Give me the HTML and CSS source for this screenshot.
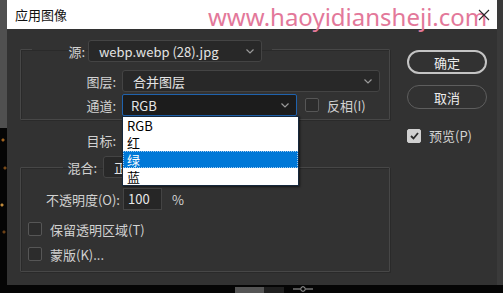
FILE: index.html
```html
<!DOCTYPE html>
<html>
<head>
  <title>应用图像</title>
  <link rel="stylesheet" href="styles.css">
</head>
<body>
  <div class="screen">
    <div class="screen-row">
      <div class="edge-left"></div>
      <div class="dialog">
        <div class="titlebar">
          <span class="title">应用图像</span>
          <span class="watermark">www.haoyidiansheji.com</span>
          <svg class="close" width="12" height="12" viewBox="0 0 12 12">
            <path d="M1 1 L11 11 M11 1 L1 11" stroke="#2a2a2a" stroke-width="1.1" fill="none"/>
          </svg>
        </div>
        <div class="dialog-body">
          <div class="main">
            <fieldset class="group group-source">
              <legend class="legend legend-source">
                <span class="legend-label">源:</span>
                <div class="select select-source">
                  <span>webp.webp (28).jpg</span>
                  <svg class="chev" width="8" height="5" viewBox="0 0 8 5"><path d="M0.5 0.5 L4 4 L7.5 0.5" stroke="#9a9a9a" stroke-width="1.2" fill="none"/></svg>
                </div>
              </legend>
              <div class="field field-layer">
                <span class="field-label">图层:</span>
                <div class="select select-layer">
                  <span>合并图层</span>
                  <svg class="chev" width="8" height="5" viewBox="0 0 8 5"><path d="M0.5 0.5 L4 4 L7.5 0.5" stroke="#9a9a9a" stroke-width="1.2" fill="none"/></svg>
                </div>
              </div>
              <div class="field field-channel">
                <span class="field-label">通道:</span>
                <div class="select-wrap">
                  <div class="select select-channel">
                    <span>RGB</span>
                    <svg class="chev" width="8" height="5" viewBox="0 0 8 5"><path d="M0.5 0.5 L4 4 L7.5 0.5" stroke="#9a9a9a" stroke-width="1.2" fill="none"/></svg>
                  </div>
                  <ul class="dropdown">
                    <li>RGB</li>
                    <li>红</li>
                    <li class="active">绿</li>
                    <li>蓝</li>
                  </ul>
                </div>
                <label class="check check-invert"><span class="box"></span>反相(I)</label>
              </div>
            </fieldset>

            <div class="field field-target">
              <span class="field-label field-label-wide">目标:</span>
            </div>

            <fieldset class="group group-blend">
              <legend class="legend legend-blend">
                <span class="legend-label legend-label-blend">混合:</span>
                <div class="select select-blend">
                  <span>正常</span>
                  <svg class="chev" width="8" height="5" viewBox="0 0 8 5"><path d="M0.5 0.5 L4 4 L7.5 0.5" stroke="#9a9a9a" stroke-width="1.2" fill="none"/></svg>
                </div>
              </legend>
              <div class="field field-opacity">
                <span class="field-label field-label-opacity">不透明度(O):</span>
                <div class="input">100</div>
                <span class="unit">%</span>
              </div>
              <label class="check check-row"><span class="box"></span>保留透明区域(T)</label>
              <label class="check check-row check-row-2"><span class="box"></span>蒙版(K)...</label>
            </fieldset>
          </div>

          <div class="side">
            <button class="btn btn-primary">确定</button>
            <button class="btn">取消</button>
            <label class="check check-preview">
              <span class="box box-checked">
                <svg width="9" height="8" viewBox="0 0 9 8"><path d="M1 4 L3.5 6.5 L8 1" stroke="#2b2b2b" stroke-width="1.8" fill="none"/></svg>
              </span>预览(P)
            </label>
          </div>
        </div>
      </div>
      <div class="edge-right"></div>
    </div>
    <div class="taskbar">
      <span class="task-grey"></span>
      <span class="task-dark"></span>
      <span class="task-slider">
        <svg width="20" height="6" viewBox="0 0 20 6"><path d="M0 3 H7 M13 3 H20" stroke="#a8a8a8" stroke-width="1"/><circle cx="10" cy="3" r="2.3" stroke="#a8a8a8" fill="none"/></svg>
      </span>
    </div>
  </div>
</body>
</html>
```

FILE: styles.css
```css
body {
  margin: 0;
  background: #000;
  font-family: "Noto Sans CJK SC", "Noto Sans", sans-serif;
  font-size: 13px;
}

.screen {
  width: 503px;
  height: 293px;
  overflow: hidden;
  display: flex;
  flex-direction: column;
}

.screen-row {
  display: flex;
  height: 285px;
}

.edge-left {
  width: 7px;
  background:
    radial-gradient(circle at 3px 140px, #a0621e 0 1px, transparent 2px),
    radial-gradient(circle at 5px 168px, #7a4a18 0 1px, transparent 2px),
    radial-gradient(circle at 2px 205px, #c08a3a 0 1px, transparent 2px),
    radial-gradient(circle at 4px 232px, #6b4015 0 1px, transparent 2px),
    linear-gradient(#505050 0 128px, #050505 128px);
}

.edge-right {
  width: 6px;
  background: #3a3a3a;
}

.dialog {
  width: 490px;
  display: flex;
  flex-direction: column;
}

.titlebar {
  position: relative;
  height: 29px;
  background: #fff;
  display: flex;
  align-items: center;
  padding-left: 8px;
}

.title {
  color: #111;
  font-size: 13px;
}

.watermark {
  position: absolute;
  left: 201px;
  top: 0;
  font-family: "Noto Sans", sans-serif;
  font-size: 24px;
  color: #e3789a;
  white-space: nowrap;
}

.close {
  position: absolute;
  left: 471px;
  top: 9px;
}

.dialog-body {
  flex: 1;
  display: flex;
  background: #323232;
}

.main {
  width: 383px;
  padding: 7px 0 0 13px;
}

.group {
  margin: 0;
  padding: 0 0 3px 0;
  min-width: 0;
  width: 370px;
  box-sizing: border-box;
  border: 1px solid #474747;
  border-radius: 1px;
  box-shadow: 1px 1px 0 #2a2a2a, inset 1px 1px 0 #2a2a2a;
}

.legend {
  display: flex;
  align-items: center;
  padding: 4px 10px 0 0;
  margin-left: 11px;
}

.legend-label {
  width: 53px;
  margin-right: 3px;
  text-align: right;
  color: #d2d2d2;
}

.legend-blend {
  padding: 0 6px 0 0;
  margin-left: 42px;
}

.legend-label-blend {
  width: 34px;
  margin-right: 6px;
}

.select {
  height: 22px;
  box-sizing: border-box;
  display: flex;
  align-items: center;
  justify-content: space-between;
  padding: 0 7px 0 10px;
  background: #282828;
  border: 1px solid #444;
  border-radius: 3px;
  color: #e4e4e4;
}

.select-source {
  width: 174px;
}

.select-layer {
  width: 258px;
}

.select-blend {
  width: 157px;
}

.select-channel {
  width: 175px;
  padding-left: 8px;
  background: #1c1c1c;
  border-color: #1f62ad;
  border-radius: 2px;
}

.field {
  display: flex;
  align-items: center;
  height: 22px;
}

.field-label {
  width: 95px;
  margin-right: 6px;
  text-align: right;
  color: #d2d2d2;
}

.field-layer {
  margin-top: 8px;
}

.field-channel {
  margin-top: 2px;
}

.select-wrap {
  position: relative;
}

.dropdown {
  position: absolute;
  top: 100%;
  left: 0;
  z-index: 10;
  width: 175px;
  margin: 0;
  padding: 0;
  list-style: none;
  background: #fff;
  border: 1px solid #16283c;
  box-shadow: 1px 1px 2px rgba(0, 0, 0, 0.6);
}

.dropdown li {
  height: 17px;
  line-height: 17px;
  padding-left: 4px;
  color: #000;
  font-size: 13px;
  box-sizing: border-box;
}

.dropdown li.active {
  background: #0078d7;
  color: #fff;
  outline: 1px dotted #9fc9ee;
  outline-offset: -1px;
}

.check {
  display: flex;
  align-items: center;
  color: #d2d2d2;
}

.box {
  width: 12px;
  height: 12px;
  border: 1px solid #565656;
  border-radius: 2px;
  background: #2c2c2c;
  margin-right: 8px;
  display: flex;
  align-items: center;
  justify-content: center;
}

.check-invert {
  margin-left: 8px;
}

.field-target {
  margin-top: 9px;
}

.field-label-wide {
  width: 96px;
}

.group-blend {
  margin-top: 5px;
  padding-bottom: 8px;
}

.field-opacity {
  margin-top: 10px;
}

.field-label-opacity {
  width: 99px;
  margin-right: 3px;
  white-space: nowrap;
}

.input {
  width: 39px;
  height: 22px;
  box-sizing: border-box;
  padding-left: 4px;
  line-height: 20px;
  background: #262626;
  border: 1px solid #444;
  color: #e8e8e8;
}

.unit {
  margin-left: 10px;
  color: #d2d2d2;
}

.check-row {
  height: 18px;
  margin: 10px 0 0 7px;
}

.check-row-2 {
  margin-top: 7px;
}

.side {
  width: 107px;
  padding: 21px 0 0 17px;
  display: flex;
  flex-direction: column;
  align-items: flex-start;
}

.btn {
  width: 80px;
  height: 24px;
  border: 1px solid #5e5e5e;
  border-radius: 12px;
  background: transparent;
  color: #ededed;
  font-family: "Noto Sans CJK SC", sans-serif;
  font-size: 13px;
  padding: 0;
  margin-bottom: 11px;
}

.btn-primary {
  border: 2px solid #c4c4c4;
}

.check-preview {
  margin-top: 6px;
}

.box-checked {
  background: #d0d0d0;
  border-color: #d0d0d0;
}

.taskbar {
  height: 8px;
  display: flex;
  align-items: flex-end;
  background: #050505;
}

.task-grey {
  width: 29px;
  height: 6px;
  margin-left: 235px;
  background: #555;
}

.task-dark {
  width: 20px;
  height: 6px;
  background: #1f1f1f;
}

.task-slider {
  display: flex;
  align-items: center;
  height: 8px;
  margin-left: 9px;
}
```
